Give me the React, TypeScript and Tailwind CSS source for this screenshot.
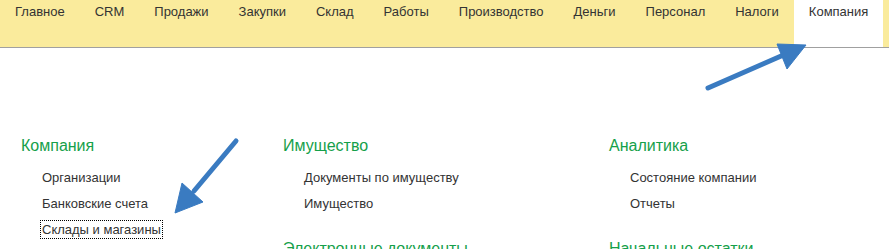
const tabs = [
  "Главное",
  "CRM",
  "Продажи",
  "Закупки",
  "Склад",
  "Работы",
  "Производство",
  "Деньги",
  "Персонал",
  "Налоги",
  "Компания",
];

type Group = { title: string; items: string[] };

const columns: { width: string; groups: Group[] }[] = [
  {
    width: "w-[262px]",
    groups: [
      {
        title: "Компания",
        items: ["Организации", "Банковские счета", "Склады и магазины"],
      },
    ],
  },
  {
    width: "w-[326px]",
    groups: [
      { title: "Имущество", items: ["Документы по имуществу", "Имущество"] },
      { title: "Электронные документы", items: [] },
    ],
  },
  {
    width: "w-[260px]",
    groups: [
      { title: "Аналитика", items: ["Состояние компании", "Отчеты"] },
      { title: "Начальные остатки", items: [] },
    ],
  },
];

const App = () => {
  const active = "Компания";
  const focused = "Склады и магазины";

  return (
    <div className="relative w-[889px] h-[249px] overflow-hidden bg-white font-['Liberation_Sans',Arial,sans-serif] text-[#333]">
      {/* Верхняя панель разделов */}
      <div className="flex h-[48px] bg-[#faeb9c] border-b border-[#a0a0a0]">
        <div className="flex">
          {tabs.map((t) => (
            <div
              key={t}
              className={
                t === active
                  ? "px-[15px] pt-[4px] text-[13px] leading-4 bg-white"
                  : "px-[15px] pt-[4px] text-[13px] leading-4"
              }
            >
              {t}
            </div>
          ))}
        </div>
      </div>

      {/* Содержимое раздела */}
      <div className="flex pl-[21px] pt-[88px]">
        {columns.map((col, i) => (
          <div key={i} className={col.width}>
            {col.groups.map((g) => (
              <div key={g.title} className="mb-[23px]">
                <div className="h-5 text-[16px] leading-5 text-[#15a04a] whitespace-nowrap">
                  {g.title}
                </div>
                {g.items.length > 0 && (
                  <div className="mt-2">
                    {g.items.map((it) => (
                      <div
                        key={it}
                        className="h-[26px] flex items-center pl-[19px] text-[13px]"
                      >
                        <span
                          className={
                            it === focused
                              ? "inline-block px-[1px] leading-[17px] border border-dotted border-black"
                              : "inline-block px-[1px] leading-[17px] border border-transparent"
                          }
                        >
                          {it}
                        </span>
                      </div>
                    ))}
                  </div>
                )}
              </div>
            ))}
          </div>
        ))}
      </div>

      {/* Стрелки-подсказки */}
      <svg
        className="absolute inset-0 pointer-events-none"
        width="889"
        height="249"
        viewBox="0 0 889 249"
      >
        <g fill="#3a7bc1" stroke="#3a7bc1">
          <line x1="708" y1="88" x2="788" y2="53" strokeWidth="5" strokeLinecap="round" />
          <polygon points="777,44 806,45 787,69" strokeWidth="1" strokeLinejoin="round" />
          <line x1="236" y1="141" x2="194" y2="191" strokeWidth="5" strokeLinecap="round" />
          <polygon points="182,183 175,213 203,202" strokeWidth="1" strokeLinejoin="round" />
        </g>
      </svg>
    </div>
  );
};

export default App;
